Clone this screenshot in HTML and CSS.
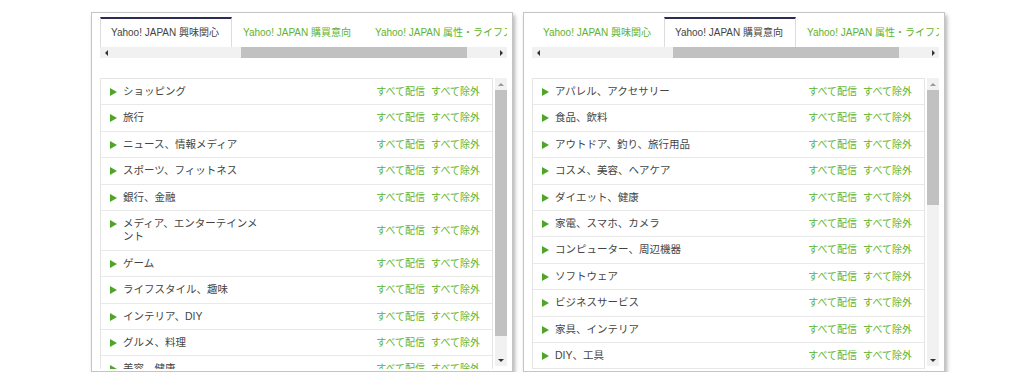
FILE: index.html
```html
<!DOCTYPE html>
<html lang="ja">
<head>
  <meta charset="UTF-8" />
  <title>セグメント選択</title>
  <link rel="stylesheet" href="styles.css">
</head>
<body>
  <div class="panels">

    <!-- 興味関心 -->
    <div class="panel">
      <div class="tabs">
        <div class="tab active">Yahoo! JAPAN 興味関心</div>
        <div class="tab">Yahoo! JAPAN 購買意向</div>
        <div class="tab">Yahoo! JAPAN 属性・ライフスタイル</div>
      </div>
      <div class="hscroll">
        <span class="arrow-left"></span>
        <div class="htrack"><div class="hthumb"></div></div>
        <span class="arrow-right"></span>
      </div>
      <div class="list-area">
        <div class="list">
          <div class="row"><div class="name"><i class="tri"></i><span>ショッピング</span></div><div class="links"><a>すべて配信</a><a>すべて除外</a></div></div>
          <div class="row"><div class="name"><i class="tri"></i><span>旅行</span></div><div class="links"><a>すべて配信</a><a>すべて除外</a></div></div>
          <div class="row"><div class="name"><i class="tri"></i><span>ニュース、情報メディア</span></div><div class="links"><a>すべて配信</a><a>すべて除外</a></div></div>
          <div class="row"><div class="name"><i class="tri"></i><span>スポーツ、フィットネス</span></div><div class="links"><a>すべて配信</a><a>すべて除外</a></div></div>
          <div class="row"><div class="name"><i class="tri"></i><span>銀行、金融</span></div><div class="links"><a>すべて配信</a><a>すべて除外</a></div></div>
          <div class="row"><div class="name"><i class="tri"></i><span>メディア、エンターテインメント</span></div><div class="links"><a>すべて配信</a><a>すべて除外</a></div></div>
          <div class="row"><div class="name"><i class="tri"></i><span>ゲーム</span></div><div class="links"><a>すべて配信</a><a>すべて除外</a></div></div>
          <div class="row"><div class="name"><i class="tri"></i><span>ライフスタイル、趣味</span></div><div class="links"><a>すべて配信</a><a>すべて除外</a></div></div>
          <div class="row"><div class="name"><i class="tri"></i><span>インテリア、DIY</span></div><div class="links"><a>すべて配信</a><a>すべて除外</a></div></div>
          <div class="row"><div class="name"><i class="tri"></i><span>グルメ、料理</span></div><div class="links"><a>すべて配信</a><a>すべて除外</a></div></div>
          <div class="row"><div class="name"><i class="tri"></i><span>美容、健康</span></div><div class="links"><a>すべて配信</a><a>すべて除外</a></div></div>
        </div>
        <div class="vscroll">
          <span class="arrow-up"></span>
          <div class="vtrack"><div class="vthumb" style="height: 246px;"></div></div>
          <span class="arrow-down"></span>
        </div>
      </div>
    </div>

    <!-- 購買意向 -->
    <div class="panel">
      <div class="tabs">
        <div class="tab">Yahoo! JAPAN 興味関心</div>
        <div class="tab active">Yahoo! JAPAN 購買意向</div>
        <div class="tab">Yahoo! JAPAN 属性・ライフスタイル</div>
      </div>
      <div class="hscroll">
        <span class="arrow-left"></span>
        <div class="htrack"><div class="hthumb"></div></div>
        <span class="arrow-right"></span>
      </div>
      <div class="list-area">
        <div class="list">
          <div class="row"><div class="name"><i class="tri"></i><span>アパレル、アクセサリー</span></div><div class="links"><a>すべて配信</a><a>すべて除外</a></div></div>
          <div class="row"><div class="name"><i class="tri"></i><span>食品、飲料</span></div><div class="links"><a>すべて配信</a><a>すべて除外</a></div></div>
          <div class="row"><div class="name"><i class="tri"></i><span>アウトドア、釣り、旅行用品</span></div><div class="links"><a>すべて配信</a><a>すべて除外</a></div></div>
          <div class="row"><div class="name"><i class="tri"></i><span>コスメ、美容、ヘアケア</span></div><div class="links"><a>すべて配信</a><a>すべて除外</a></div></div>
          <div class="row"><div class="name"><i class="tri"></i><span>ダイエット、健康</span></div><div class="links"><a>すべて配信</a><a>すべて除外</a></div></div>
          <div class="row"><div class="name"><i class="tri"></i><span>家電、スマホ、カメラ</span></div><div class="links"><a>すべて配信</a><a>すべて除外</a></div></div>
          <div class="row"><div class="name"><i class="tri"></i><span>コンピューター、周辺機器</span></div><div class="links"><a>すべて配信</a><a>すべて除外</a></div></div>
          <div class="row"><div class="name"><i class="tri"></i><span>ソフトウェア</span></div><div class="links"><a>すべて配信</a><a>すべて除外</a></div></div>
          <div class="row"><div class="name"><i class="tri"></i><span>ビジネスサービス</span></div><div class="links"><a>すべて配信</a><a>すべて除外</a></div></div>
          <div class="row"><div class="name"><i class="tri"></i><span>家具、インテリア</span></div><div class="links"><a>すべて配信</a><a>すべて除外</a></div></div>
          <div class="row"><div class="name"><i class="tri"></i><span>DIY、工具</span></div><div class="links"><a>すべて配信</a><a>すべて除外</a></div></div>
          <div class="row"><div class="name"><i class="tri"></i><span>車、バイク</span></div><div class="links"><a>すべて配信</a><a>すべて除外</a></div></div>
        </div>
        <div class="vscroll">
          <span class="arrow-up"></span>
          <div class="vtrack"><div class="vthumb" style="height: 115px;"></div></div>
          <span class="arrow-down"></span>
        </div>
      </div>
    </div>

  </div>
</body>
</html>
```

FILE: styles.css
```css
* {
  box-sizing: border-box;
}

body {
  margin: 0;
  background: #fff;
  font-family: "Liberation Sans", "Noto Sans CJK JP", sans-serif;
  font-size: 10px;
  color: #444;
}

.panels {
  display: flex;
  gap: 10px;
  padding: 12px 0 0 91px;
}

.panel {
  width: 422px;
  height: 360px;
  border: 1px solid #c4c4c4;
  background: #fff;
  box-shadow: 2px 3px 4px rgba(0, 0, 0, 0.3);
  padding: 4px 5px 2px 8px;
  display: flex;
  flex-direction: column;
}

/* tabs */
.tabs {
  display: flex;
  height: 30px;
  overflow: hidden;
  white-space: nowrap;
}

.tab {
  flex: 0 0 132px;
  border-top: 2px solid transparent;
  padding: 0 0 0 11px;
  line-height: 27px;
  color: #5db42f;
}

.tab.active {
  border-top-color: #2c2c55;
  border-left: 1px solid #ddd;
  border-right: 1px solid #ddd;
  padding-left: 10px;
  color: #444;
}

/* horizontal scrollbar */
.hscroll {
  display: flex;
  align-items: center;
  height: 11px;
  background: #f1f1f1;
  margin-bottom: 20px;
}

.htrack {
  flex: 1;
  height: 100%;
}

.hthumb {
  margin-left: 129px;
  width: 226px;
  height: 100%;
  background: #c1c1c1;
}

.arrow-left,
.arrow-right {
  width: 12px;
  display: flex;
  justify-content: center;
}

.arrow-left::before {
  content: "";
  border-right: 3px solid #333;
  border-top: 3px solid transparent;
  border-bottom: 3px solid transparent;
}

.arrow-right::before {
  content: "";
  border-left: 3px solid #333;
  border-top: 3px solid transparent;
  border-bottom: 3px solid transparent;
}

/* list */
.list-area {
  display: flex;
  height: 291px;
  gap: 2px;
}

.list {
  flex: 1;
  border: 1px solid #e4e4e4;
  border-bottom: none;
  overflow: hidden;
}

.row {
  display: flex;
  align-items: center;
  justify-content: space-between;
  padding: 6px 12px 6px 9px;
  border-bottom: 1px solid #e8e8e8;
  line-height: 13.4px;
}

.name {
  display: flex;
  align-items: flex-start;
  max-width: 152px;
  font-size: 10.5px;
}

.tri {
  flex: none;
  width: 0;
  height: 0;
  margin: 3px 6px 0 0;
  border-left: 7px solid #4ea52a;
  border-top: 4px solid transparent;
  border-bottom: 4px solid transparent;
}

.links {
  display: flex;
  gap: 6px;
  white-space: nowrap;
}

.links a {
  color: #5db42f;
}

/* vertical scrollbar */
.vscroll {
  width: 12px;
  height: 288px;
  background: #f1f1f1;
  display: flex;
  flex-direction: column;
  align-items: center;
}

.vtrack {
  flex: 1;
  width: 100%;
}

.vthumb {
  width: 100%;
  background: #c1c1c1;
}

.arrow-up,
.arrow-down {
  height: 12px;
  display: flex;
  align-items: center;
}

.arrow-up::before {
  content: "";
  border-bottom: 3px solid #999;
  border-left: 3px solid transparent;
  border-right: 3px solid transparent;
}

.arrow-down::before {
  content: "";
  border-top: 3px solid #333;
  border-left: 3px solid transparent;
  border-right: 3px solid transparent;
}
```
